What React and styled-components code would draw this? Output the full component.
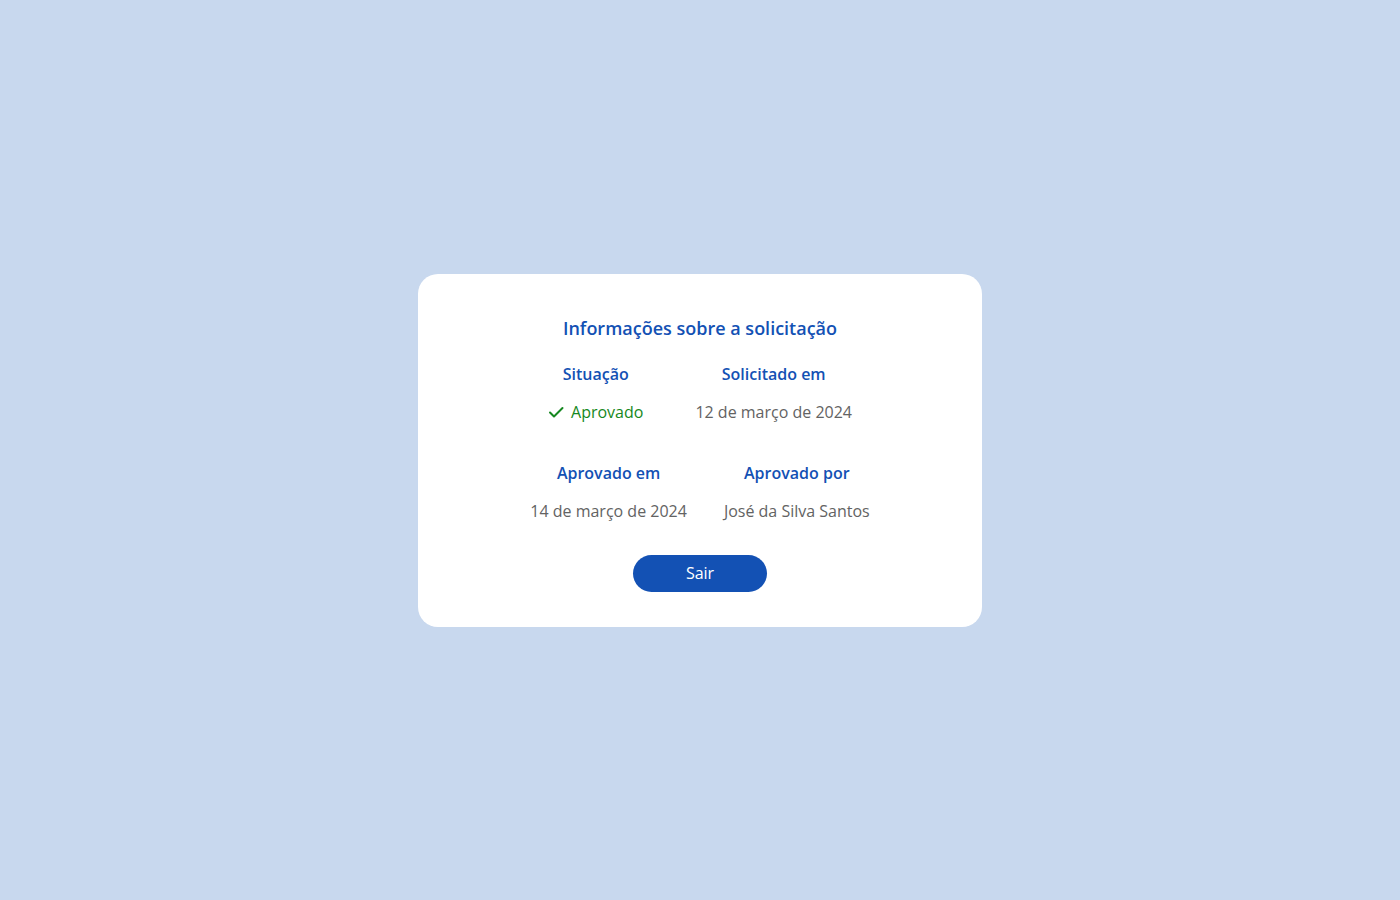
import styled, { createGlobalStyle } from "styled-components";

const GlobalStyle = createGlobalStyle`
  html, body {
    margin: 0;
    padding: 0;
    background: #c8d8ee;
    font-family: "Open Sans", "Lato", sans-serif;
  }
`;

//---Page---//
const Page = styled.div`
  width: 100vw;
  height: 900px;
  display: flex;
  align-items: center;
  justify-content: center;
`;

const Card = styled.div`
  width: 564px;
  box-sizing: border-box;
  background: #ffffff;
  border-radius: 20px;
  padding: 42px 0 35px;
  display: flex;
  flex-direction: column;
  align-items: center;
`;

const Title = styled.h2`
  margin: 0 0 22px;
  font-size: 18px;
  line-height: 24px;
  font-weight: 600;
  color: #1351b4;
`;

const Row = styled.div`
  display: flex;
  justify-content: center;
  gap: ${(p) => p.gap}px;
  margin-bottom: ${(p) => p.bottom}px;
`;

const Column = styled.div`
  display: flex;
  flex-direction: column;
  align-items: center;
  gap: 14px;
`;

const Label = styled.span`
  font-size: 16px;
  line-height: 24px;
  font-weight: 600;
  color: #1351b4;
`;

const Value = styled.span`
  display: flex;
  align-items: center;
  gap: 7px;
  font-size: 16px;
  line-height: 24px;
  color: ${(p) => (p.success ? "#168821" : "#636363")};
`;

const ExitButton = styled.button`
  width: 134px;
  height: 37px;
  border: none;
  border-radius: 999px;
  background: #1351b4;
  color: #ffffff;
  font-family: inherit;
  font-size: 16px;
  cursor: pointer;
`;

const Check = () => (
  <svg width="16" height="16" viewBox="0 0 16 16" fill="none">
    <path
      d="M2 8.5 L6 12.5 L14.5 4"
      stroke="#168821"
      strokeWidth="2"
      strokeLinecap="round"
      strokeLinejoin="round"
    />
  </svg>
);

const App = () => {
  return (
    <>
      <GlobalStyle />
      <Page>
        <Card>
          <Title>Informações sobre a solicitação</Title>
          <Row gap={52} bottom={37}>
            <Column>
              <Label>Situação</Label>
              <Value success>
                <Check />
                Aprovado
              </Value>
            </Column>
            <Column>
              <Label>Solicitado em</Label>
              <Value>12 de março de 2024</Value>
            </Column>
          </Row>
          <Row gap={37} bottom={32}>
            <Column>
              <Label>Aprovado em</Label>
              <Value>14 de março de 2024</Value>
            </Column>
            <Column>
              <Label>Aprovado por</Label>
              <Value>José da Silva Santos</Value>
            </Column>
          </Row>
          <ExitButton>Sair</ExitButton>
        </Card>
      </Page>
    </>
  );
};

export default App;
